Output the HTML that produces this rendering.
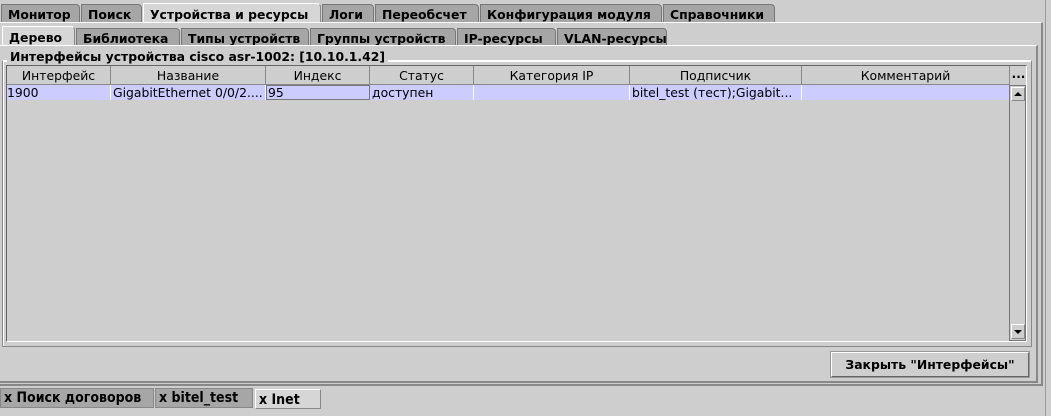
<!DOCTYPE html>
<html><head><meta charset="utf-8"><style>
*{box-sizing:border-box;margin:0;padding:0}
body{width:1051px;height:416px;background:#cecece;position:relative;overflow:hidden;font-family:"DejaVu Sans","Liberation Sans",sans-serif;font-size:12px;color:#000}
.a{position:absolute}
.tab{position:absolute;height:18px;background:#a6a6a6;border:1px solid #777;border-bottom:none;font-weight:bold;font-size:12.4px;line-height:19px;padding-left:6px;white-space:nowrap;border-top-right-radius:4px}
.tab.sel{background:#d6d6d6;border-color:#fff #888 #888 #fff;height:20px;line-height:21px}
.cell{position:absolute;top:0;height:18px;border-right:1px solid #888;text-align:center;line-height:19px;white-space:nowrap;overflow:hidden;font-size:12.4px}
.rc{position:absolute;top:0;height:15px;line-height:15px;padding-left:2px;white-space:nowrap;overflow:hidden;border-right:1px solid #fff;font-size:12.4px}
.bt{position:absolute;height:20px;font-family:"Liberation Sans Narrow","DejaVu Sans Condensed","DejaVu Sans",sans-serif;font-weight:bold;font-size:14px;line-height:19px;white-space:nowrap;border:1px solid #888;padding-left:3px}
</style></head><body>
<div class="tab" style="left:1px;top:4px;width:79px">Монитор</div>
<div class="tab" style="left:81px;top:4px;width:61px">Поиск</div>
<div class="tab sel" style="left:143px;top:3px;width:178px">Устройства и ресурсы</div>
<div class="tab" style="left:322px;top:4px;width:52px">Логи</div>
<div class="tab" style="left:375px;top:4px;width:104px">Переобсчет</div>
<div class="tab" style="left:480px;top:4px;width:182px">Конфигурация модуля</div>
<div class="tab" style="left:663px;top:4px;width:112px">Справочники</div>
<div class="a" style="left:0;top:22px;width:1043px;height:364px;border-top:1px solid #fff;border-right:2px solid #888;border-bottom:2px solid #888"></div>
<div class="a" style="left:1045px;top:0;width:1px;height:416px;background:#999"></div>
<div class="tab sel" style="left:2px;top:26px;width:73px">Дерево</div>
<div class="tab" style="left:76px;top:28px;width:104px">Библиотека</div>
<div class="tab" style="left:181px;top:28px;width:128px">Типы устройств</div>
<div class="tab" style="left:310px;top:28px;width:146px">Группы устройств</div>
<div class="tab" style="left:457px;top:28px;width:99px">IP-ресурсы</div>
<div class="tab" style="left:557px;top:28px;width:110px">VLAN-ресурсы</div>
<div class="a" style="left:0;top:45px;width:1038px;height:338px;border-top:1px solid #fff;border-right:2px solid #888;border-bottom:2px solid #888"></div>
<div class="a" style="left:2px;top:60px;width:1030px;height:287px;border:1px solid #888;border-top-color:#fff;box-shadow:inset 1px 1px 0 #fff"></div>
<div class="a" style="left:7px;top:47px;background:#cecece;padding:0 3px;font-weight:bold;font-size:12.4px;line-height:19px">Интерфейсы устройства cisco asr-1002: [10.10.1.42]</div>
<div class="a" style="left:6px;top:65px;width:1021px;height:277px;border:1px solid #666;border-right-color:#fff;border-bottom-color:#fff">
 <div class="a" style="left:0;top:0;width:1003px;height:19px;border-bottom:1px solid #888;background:#cecece">
  <div class="cell" style="left:0;width:104px">Интерфейс</div>
  <div class="cell" style="left:104px;width:155px">Название</div>
  <div class="cell" style="left:259px;width:104px">Индекс</div>
  <div class="cell" style="left:363px;width:104px">Статус</div>
  <div class="cell" style="left:467px;width:156px">Категория IP</div>
  <div class="cell" style="left:623px;width:172px">Подписчик</div>
  <div class="cell" style="left:795px;width:208px">Комментарий</div>
 </div>
 <div class="a" style="left:1003px;top:0;width:17px;height:19px;line-height:16px;font-weight:bold;text-align:center">...</div>
 <div class="a" style="left:0;top:19px;width:1002px;height:15px;background:#ccccff">
  <div class="rc" style="left:0;width:104px;padding-left:0">1900</div>
  <div class="rc" style="left:104px;width:155px">GigabitEthernet 0/0/2....</div>
  <div class="rc" style="left:259px;width:104px;border:1px solid #777;line-height:13px;padding-left:1px">95</div>
  <div class="rc" style="left:363px;width:104px">доступен</div>
  <div class="rc" style="left:467px;width:156px"></div>
  <div class="rc" style="left:623px;width:172px">bitel_test (тест);Gigabit...</div>
 </div>
 <div class="a" style="left:1002px;top:19px;width:17px;height:256px;border:1px solid #777;background:#cecece">
  <div class="a" style="left:1px;top:1px;width:14px;height:14px;border:1px solid;border-color:#fff #888 #888 #fff"><div class="a" style="left:2px;top:4px;width:0;height:0;border-left:4px solid transparent;border-right:4px solid transparent;border-bottom:4px solid #000"></div></div>
  <div class="a" style="left:1px;top:238px;width:14px;height:15px;border:1px solid;border-color:#fff #888 #888 #fff"><div class="a" style="left:2px;top:5px;width:0;height:0;border-left:4px solid transparent;border-right:4px solid transparent;border-top:4px solid #000"></div></div>
 </div>
</div>
<div class="a" style="left:831px;top:352px;width:198px;height:25px;border:1px solid;border-color:#fff #666 #666 #fff;box-shadow:0 0 0 1px #999;font-weight:bold;font-size:12.4px;text-align:center;line-height:24px">Закрыть "Интерфейсы"</div>
<div class="bt" style="left:0;top:388px;width:154px;background:#a6a6a6">x Поиск договоров</div>
<div class="bt" style="left:155px;top:388px;width:98px;background:#a6a6a6">x bitel_test</div>
<div class="bt" style="left:255px;top:389px;width:66px;background:#d6d6d6;border-color:#fff #888 #888 #fff;line-height:21px">x Inet</div>
</body></html>
